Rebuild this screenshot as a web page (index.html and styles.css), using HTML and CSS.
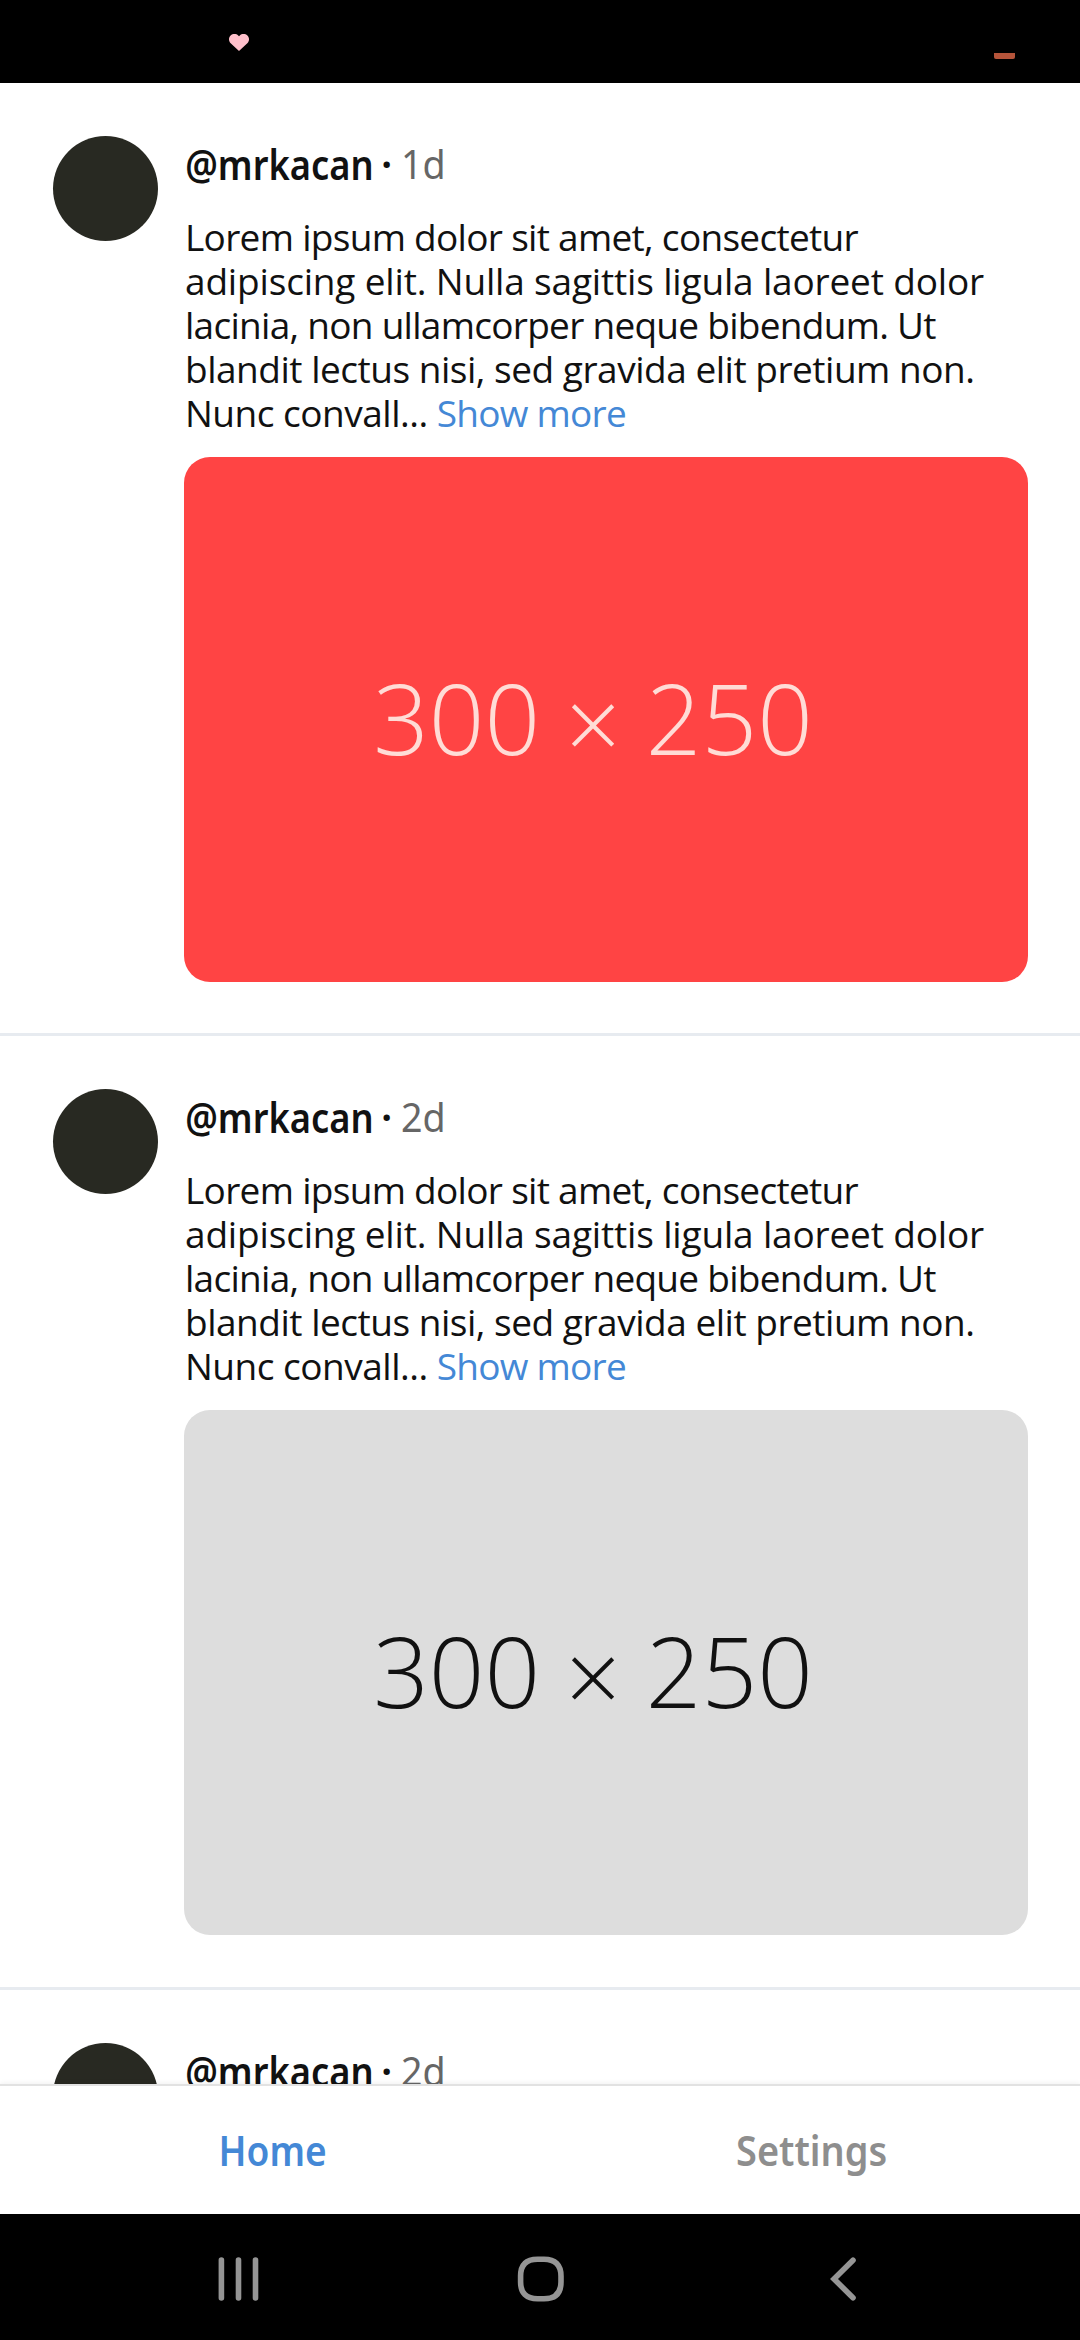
FILE: index.html
```html
<!DOCTYPE html>
<html lang="en">
<head>
<meta charset="utf-8">
<title>Home</title>
<link rel="stylesheet" href="styles.css">
</head>
<body>
<div class="screen">
  <header class="status-bar">
    <svg class="status-heart" viewBox="0 0 20 17"><path d="M10 17 L1.4 9 C-0.6 6.8 -0.4 3.2 1.6 1.4 C3.8 -0.5 7.4 -0.4 9.2 1.5 L10 2.2 L10.8 1.5 C12.6 -0.4 16.2 -0.5 18.4 1.4 C20.4 3.2 20.6 6.8 18.6 9 Z"/></svg>
    <span class="status-battery"></span>
  </header>

  <main class="feed">
    <article class="post">
      <div class="avatar"></div>
      <div class="post-main">
        <div class="post-head"><span class="name">@mrkacan</span><span class="dot">·</span><span class="time">1d</span></div>
        <p class="post-text">
          <span class="line l1">Lorem ipsum dolor sit amet, consectetur</span>
          <span class="line l2">adipiscing elit. Nulla sagittis ligula laoreet dolor</span>
          <span class="line l3">lacinia, non ullamcorper neque bibendum. Ut</span>
          <span class="line l4">blandit lectus nisi, sed gravida elit pretium non.</span>
          <span class="line l5">Nunc convall... <a class="more">Show more</a></span>
        </p>
        <div class="media media-red"><span>300</span><span class="times">×</span><span>250</span></div>
      </div>
    </article>

    <article class="post">
      <div class="avatar"></div>
      <div class="post-main">
        <div class="post-head"><span class="name">@mrkacan</span><span class="dot">·</span><span class="time">2d</span></div>
        <p class="post-text">
          <span class="line l1">Lorem ipsum dolor sit amet, consectetur</span>
          <span class="line l2">adipiscing elit. Nulla sagittis ligula laoreet dolor</span>
          <span class="line l3">lacinia, non ullamcorper neque bibendum. Ut</span>
          <span class="line l4">blandit lectus nisi, sed gravida elit pretium non.</span>
          <span class="line l5">Nunc convall... <a class="more">Show more</a></span>
        </p>
        <div class="media media-grey"><span>300</span><span class="times">×</span><span>250</span></div>
      </div>
    </article>

    <article class="post">
      <div class="avatar"></div>
      <div class="post-main">
        <div class="post-head"><span class="name">@mrkacan</span><span class="dot">·</span><span class="time">2d</span></div>
      </div>
    </article>
  </main>

  <nav class="tabs">
    <a class="tab tab-active"><span class="tab-home">Home</span></a>
    <a class="tab"><span class="tab-settings">Settings</span></a>
  </nav>

  <footer class="system-nav">
    <svg class="nav-icon" viewBox="0 0 60 60"><path d="M13.4 11v38M30.5 11v38M47.5 11v38"/></svg>
    <svg class="nav-icon nav-home" viewBox="0 0 60 60"><path d="M30.7 10.2H34Q51 10.2 51 27V33Q51 49.8 34 49.8H27.6Q10.6 49.8 10.6 33V27Q10.6 10.2 27.6 10.2Z"/></svg>
    <svg class="nav-icon nav-back" viewBox="0 0 60 60"><path d="M41 11.3 22 30 41 48.7"/></svg>
  </footer>
</div>
</body>
</html>
```
FILE: styles.css
```css
* { box-sizing: border-box; }

body {
  margin: 0;
  background: #fff;
  font-family: "Open Sans", "Noto Sans", sans-serif;
  color: #111;
}

.screen {
  width: 1080px;
  height: 2340px;
  display: flex;
  flex-direction: column;
  overflow: hidden;
}

.status-bar {
  flex: none;
  height: 83px;
  padding: 34px 65px 0 229px;
  background: #000;
  display: flex;
  justify-content: space-between;
}
.status-heart { width: 20px; height: 17px; fill: #ffc0cb; }
.status-battery {
  width: 21px;
  height: 6px;
  margin-top: 19px;
  background: #b5543a;
  border-radius: 0 0 2px 2px;
}

.feed {
  flex: 1;
  min-height: 0;
  overflow: hidden;
}
.post {
  display: flex;
  gap: 26px;
  padding: 53px 52px 51.4px 53px;
  border-bottom: 3px solid #e7ebf0;
}
.avatar {
  flex: none;
  width: 105px;
  height: 105px;
  border-radius: 50%;
  background: #282922;
}
.post-main { flex: 1; min-width: 0; }

.post-head {
  display: flex;
  height: 54px;
  padding: 1px 0 0 1px;
  margin-bottom: 25px;
  font: 600 41px/54px "Noto Sans", sans-serif;
}
.name {
  width: 196px;
  transform: scaleX(.885);
  transform-origin: 2px 0;
}
.dot { width: 20px; }
.time {
  color: #666;
  font-size: 40px;
  font-weight: 400;
  transform: scaleX(.94);
  transform-origin: 0 0;
}

.post-text {
  margin: 0;
  padding-left: 1px;
  font-size: 37px;
  line-height: 44px;
}
.line { display: block; white-space: nowrap; }
.l1 { letter-spacing: -.7px; }
.l2 { letter-spacing: -.17px; }
.l3 { letter-spacing: -.72px; }
.l4 { letter-spacing: -.48px; }
.l5 { letter-spacing: -.5px; }
.more { color: #4488d6; letter-spacing: -.75px; }

.media {
  display: flex;
  align-items: center;
  justify-content: center;
  gap: 25px;
  width: 844px;
  height: 525px;
  margin-top: 22px;
  padding: 0 26px 4px 0;
  border-radius: 26px;
  font-size: 97.5px;
  font-weight: 300;
  white-space: nowrap;
}
.media-red { background: #ff4444; color: #ffdcd6; }
.media-grey { background: #ddd; color: #111; }
.times { padding-top: 10px; }

.tabs {
  flex: none;
  display: flex;
  height: 130px;
  background: #fff;
  border-top: 2px solid #e2e2e2;
  box-shadow: 0 -1px 5px rgba(0, 0, 0, .06);
  position: relative;
}
.tab {
  flex: 1;
  display: flex;
  align-items: center;
  justify-content: center;
  font: 600 41px/54px "Noto Sans", sans-serif;
  color: #8e8e8e;
}
.tab-active { color: #4488d6; }
.tab-home { padding-left: 5px; transform: scaleX(.903); }
.tab-settings { padding-left: 3px; transform: scaleX(.925); }

.system-nav {
  flex: none;
  height: 126px;
  padding: 3px 87px 0;
  background: #000;
  display: flex;
  justify-content: space-around;
  align-items: center;
}
.nav-icon {
  width: 60px;
  height: 60px;
  fill: none;
  stroke: #959595;
  stroke-width: 5.6;
  stroke-linecap: round;
}
```
